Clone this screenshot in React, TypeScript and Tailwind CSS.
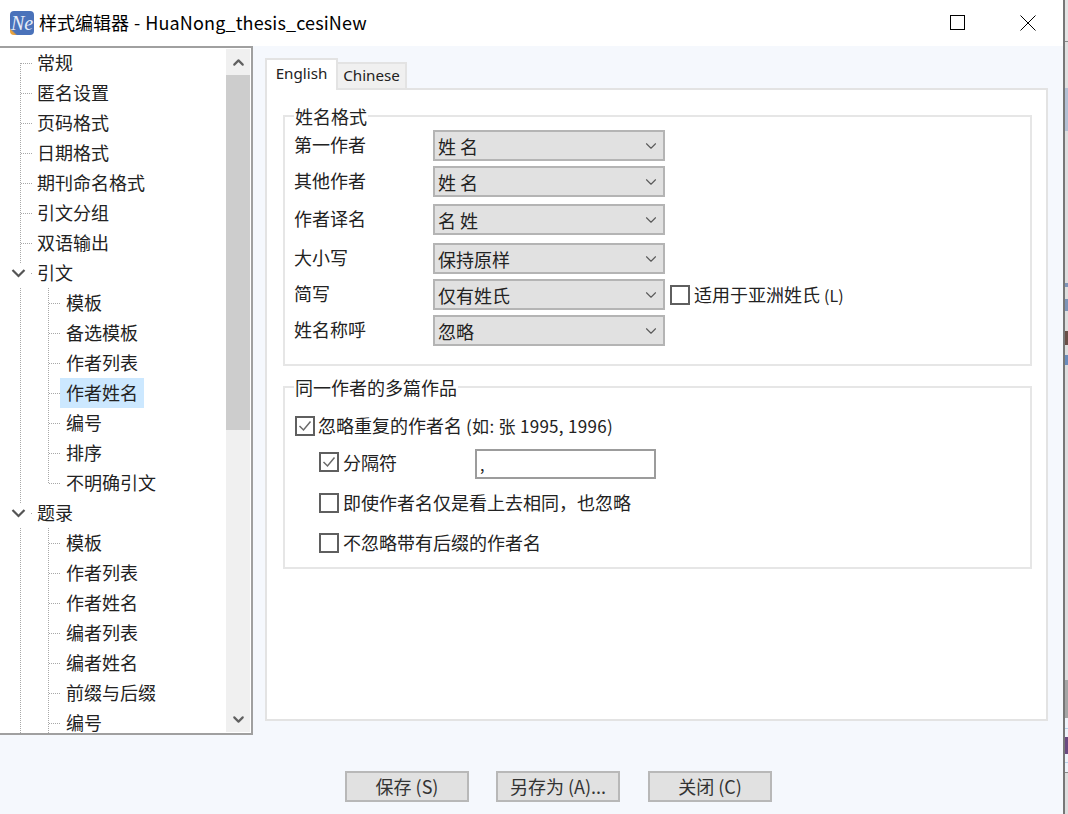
import React from 'react';
import { ChevronDown, ChevronUp } from 'lucide-react';

const cjk = "font-['Noto_Sans_CJK_SC','Noto_Sans',sans-serif]";

type TreeRow = { label: string; level: 0 | 1; open?: boolean; selected?: boolean; last?: boolean };

const treeRows: TreeRow[] = [
  { label: '常规', level: 0 },
  { label: '匿名设置', level: 0 },
  { label: '页码格式', level: 0 },
  { label: '日期格式', level: 0 },
  { label: '期刊命名格式', level: 0 },
  { label: '引文分组', level: 0 },
  { label: '双语输出', level: 0 },
  { label: '引文', level: 0, open: true },
  { label: '模板', level: 1 },
  { label: '备选模板', level: 1 },
  { label: '作者列表', level: 1 },
  { label: '作者姓名', level: 1, selected: true },
  { label: '编号', level: 1 },
  { label: '排序', level: 1 },
  { label: '不明确引文', level: 1, last: true },
  { label: '题录', level: 0, open: true },
  { label: '模板', level: 1 },
  { label: '作者列表', level: 1 },
  { label: '作者姓名', level: 1 },
  { label: '编者列表', level: 1 },
  { label: '编者姓名', level: 1 },
  { label: '前缀与后缀', level: 1 },
  { label: '编号', level: 1 },
];

// dotted connector lines of one tree row
const TreeGuides: React.FC<{ row: TreeRow; index: number; height: number }> = ({ row, index, height }) => {
  const dots = { stroke: '#a8a8a8', strokeWidth: 1, strokeDasharray: '1 1' };
  const afterCiting = index > 7 && index < 15;
  const afterBiblio = index > 15;
  return (
    <svg width="64" height={height} className="shrink-0">
      {row.level === 0 && !row.open && <line x1="20.5" y1={index === 0 ? 15 : 0} x2="20.5" y2="30" {...dots} />}
      {row.level === 0 && !row.open && <line x1="21" y1="15.5" x2="33" y2="15.5" {...dots} />}
      {row.open && <line x1="20.5" y1="0" x2="20.5" y2="6" {...dots} />}
      {row.open && <line x1="31" y1="15.5" x2="33" y2="15.5" {...dots} />}
      {row.open && <path d="M12.5 12 L18.5 18 L24.5 12" fill="none" stroke="#555" strokeWidth="2.2" />}
      {(afterCiting || afterBiblio) && <line x1="20.5" y1="0" x2="20.5" y2="30" {...dots} />}
      {row.level === 1 && <line x1="48.5" y1="0" x2="48.5" y2={row.last ? 15 : 30} {...dots} />}
      {row.level === 1 && <line x1="49" y1="15.5" x2="61" y2="15.5" {...dots} />}
    </svg>
  );
};

const Tree: React.FC = () => (
  <div className="flex h-[689px] w-[253px] shrink-0 border-t-2 border-r-2 border-b-2 border-[#a0a0a0] bg-white">
    <div className="flex min-w-0 flex-1 flex-col">
      {treeRows.map((row, i) => {
        // the list is scrolled so its bottom row only just fits
        const clipped = i === treeRows.length - 1;
        return (
          <div key={i} className={`flex shrink-0 ${clipped ? 'h-[25px] items-start' : 'h-[30px] items-center'}`}>
            <TreeGuides row={row} index={i} height={clipped ? 25 : 30} />
            <span
              className={`flex items-center pb-[2px] text-[18px] leading-none text-[#222] ${
                row.level === 0 ? '-ml-[27px]' : '-ml-[4px] px-[6px]'
              } ${row.selected ? 'h-[30px] bg-[#cce8ff]' : ''} ${clipped ? 'mt-[5px]' : ''}`}
            >
              {row.label}
            </span>
          </div>
        );
      })}
    </div>
    <div className="my-[1px] flex w-[24px] shrink-0 flex-col bg-[#f0f0f0]">
      <div className="flex h-[26px] items-center justify-center">
        <ChevronUp size={17} strokeWidth={3} className="text-[#606060]" />
      </div>
      <div className="h-[355px] bg-[#cdcdcd]" />
      <div className="mt-auto flex h-[26px] items-center justify-center">
        <ChevronDown size={17} strokeWidth={3} className="text-[#606060]" />
      </div>
    </div>
    <div className="w-[1px] shrink-0 bg-white" />
  </div>
);

const Select: React.FC<{ value: string }> = ({ value }) => (
  <div className="flex h-[31px] w-[232px] shrink-0 items-center justify-between border-2 border-[#b4b4b4] bg-[#e1e1e1] pr-[3px] pl-[3px] text-[18px] leading-none text-[#222]">
    <span>{value}</span>
    <ChevronDown size={18} strokeWidth={1.5} className="text-[#5a5a5a]" />
  </div>
);

const NameRow: React.FC<{ label: string; value: string; className: string; children?: React.ReactNode }> = ({
  label,
  value,
  className,
  children,
}) => (
  <div className={`flex items-center ${className}`}>
    <span className="w-[138px] shrink-0 -translate-x-[1px] -translate-y-[2px] text-[18px] leading-none text-[#222]">
      {label}
    </span>
    <Select value={value} />
    {children}
  </div>
);

const Check: React.FC<{ checked?: boolean }> = ({ checked }) => (
  <span className="flex h-[20px] w-[20px] shrink-0 items-center justify-center border-2 border-[#5f5f5f] bg-white">
    {checked && (
      <svg width="16" height="16" viewBox="0 0 16 16">
        <path d="M2.5 8 L6.5 12 L13.5 3.5" fill="none" stroke="#6a6a6a" strokeWidth="1.5" />
      </svg>
    )}
  </span>
);

const GroupBox: React.FC<{ title: string; className: string; children: React.ReactNode }> = ({
  title,
  className,
  children,
}) => (
  <div className={`relative border-2 border-[#e6e6e6] ${className}`}>
    <span className="absolute -top-[11px] left-[9px] bg-white px-[1px] text-[18px] leading-[20px] text-[#222]">
      {title}
    </span>
    {children}
  </div>
);

const Footer: React.FC<{ label: string; className?: string }> = ({ label, className = '' }) => (
  <button
    className={`flex h-[31px] w-[124px] items-center justify-center border-2 border-[#b8b8b8] bg-[#e1e1e1] pb-[1px] text-[18px] leading-none text-[#333] ${className}`}
  >
    {label}
  </button>
);

// sliver of whatever window lies behind the dialog
const OuterStrip: React.FC = () => (
  <div className="flex w-[5px] shrink-0 flex-col border-l-2 border-[#777] bg-[#dcdcdc]">
    <div className="h-[41px] bg-[#e4e4e4]" />
    <div className="h-[1px] bg-[#8a8a8a]" />
    <div className="h-[46px] bg-[#e0e0e0]" />
    <div className="h-[43px] bg-[#b4c0d4]" />
    <div className="h-[152px] bg-[#dedede]" />
    <div className="h-[4px] bg-[#7f95b8]" />
    <div className="h-[12px] bg-[#dedede]" />
    <div className="h-[12px] bg-[#7f95b8]" />
    <div className="h-[20px] bg-[#dedede]" />
    <div className="h-[14px] bg-[#6a5048]" />
    <div className="h-[10px] bg-[#dedede]" />
    <div className="h-[10px] bg-[#6a8cbc]" />
    <div className="h-[315px] bg-[#dedede]" />
    <div className="h-[38px] bg-[#a6a6a6]" />
    <div className="h-[10px] bg-[#eef3fa]" />
    <div className="h-[1px] bg-[#b8d0ea]" />
    <div className="h-[8px] bg-[#eef3fa]" />
    <div className="h-[17px] bg-[#6a4a80]" />
    <div className="h-[8px] bg-[#eef3fa]" />
    <div className="h-[1px] bg-[#b8d0ea]" />
    <div className="h-[9px] bg-[#eef3fa]" />
    <div className="h-[1px] bg-[#8a8a8a]" />
    <div className="flex-1 bg-[#dedede]" />
  </div>
);

export default function App() {
  return (
    <div className={`flex h-[814px] w-[1068px] overflow-hidden bg-[#f5f8fd] ${cjk}`}>
      <div className="flex w-[1063px] flex-col">
        {/* Title bar */}
        <div className="flex h-[46px] shrink-0 items-center bg-white pl-[10px]">
          <div className="flex h-[24px] w-[24px] items-center justify-center overflow-hidden rounded-[4px] bg-[linear-gradient(45deg,#e9a23b_11%,#4a72ba_16%)]">
            <span className="font-['Liberation_Serif',serif] text-[20px] leading-none text-[#e6edf8] italic">Ne</span>
          </div>
          <span className="ml-[5px] pb-[2px] text-[18px] leading-none text-black">
            样式编辑器<span className="mx-[5px]">-</span>
            <span className="tracking-[0.14px]">HuaNong_thesis_cesiNew</span>
          </span>
          <svg width="16" height="16" viewBox="0 0 16 16" className="ml-auto">
            <rect x="0.5" y="0.5" width="14" height="14" fill="none" stroke="#000" />
          </svg>
          <svg width="16" height="16" viewBox="0 0 16 16" className="mr-[27px] ml-[54px]">
            <path d="M0.5 0.5 L15.5 15.5 M15.5 0.5 L0.5 15.5" fill="none" stroke="#000" />
          </svg>
        </div>

        <div className="flex">
          <Tree />

          {/* Right side */}
          <div className="flex min-w-0 flex-1 flex-col pt-[12px] pr-[15px] pl-[12px]">
            <div className="flex h-[30px] items-end">
              <div className="z-10 -mb-[2px] flex h-[32px] w-[73px] items-start justify-center border-2 border-b-0 border-[#e3e3e3] bg-white pt-[2px] font-['Noto_Sans',sans-serif] text-[15.2px] leading-[22px] text-[#222]">
                English
              </div>
              <div className="flex h-[26px] w-[69px] items-center justify-center border-2 border-b-0 border-l-0 border-[#e3e3e3] bg-[#f0f0f0] font-['Noto_Sans',sans-serif] text-[15.2px] leading-none text-[#222]">
                Chinese
              </div>
            </div>
            <div className="flex h-[633px] flex-col border-2 border-[#e3e3e3] bg-white pt-[25px] pr-[14px] pl-[16px]">
              <GroupBox title="姓名格式" className="h-[251px] pt-[13px] pl-[10px]">
                <NameRow label="第一作者" value="姓 名" className="" />
                <NameRow label="其他作者" value="姓 名" className="mt-[5px]" />
                <NameRow label="作者译名" value="名 姓" className="mt-[7px]" />
                <NameRow label="大小写" value="保持原样" className="mt-[8px]" />
                <NameRow label="简写" value="仅有姓氏" className="mt-[5px]">
                  <span className="ml-[5px]">
                    <Check />
                  </span>
                  <span className="ml-[4px] -translate-y-[1px] text-[18px] leading-none text-[#222]">
                    适用于亚洲姓氏 <span className="text-[16px]">(L)</span>
                  </span>
                </NameRow>
                <NameRow label="姓名称呼" value="忽略" className="mt-[5px]" />
              </GroupBox>

              <GroupBox title="同一作者的多篇作品" className="mt-[20px] h-[183px] pt-[28px] pl-[10px]">
                <div className="flex h-[20px] items-center">
                  <Check checked />
                  <span className="ml-[3px] -translate-y-[1px] text-[18px] leading-none text-[#222]">
                    忽略重复的作者名 <span className="text-[17px] tracking-[0.3px]">(如: 张 1995, 1996)</span>
                  </span>
                </div>
                <div className="mt-[13px] flex h-[30px] items-start pl-[24px]">
                  <span className="mt-[3px]">
                    <Check checked />
                  </span>
                  <span className="mt-[4px] ml-[4px] w-[132px] text-[18px] leading-none text-[#222]">分隔符</span>
                  <div className="flex h-[30px] w-[181px] items-center border-2 border-[#9c9c9c] bg-white pl-[3px] text-[16px] leading-none text-[#222]">
                    ,
                  </div>
                </div>
                <div className="mt-[14px] flex h-[20px] items-center pl-[24px]">
                  <Check />
                  <span className="ml-[4px] -translate-y-[1px] text-[18px] leading-none text-[#222]">
                    即使作者名仅是看上去相同，也忽略
                  </span>
                </div>
                <div className="mt-[20px] flex h-[20px] items-center pl-[24px]">
                  <Check />
                  <span className="ml-[4px] -translate-y-[1px] text-[18px] leading-none text-[#222]">
                    不忽略带有后缀的作者名
                  </span>
                </div>
              </GroupBox>
            </div>
          </div>
        </div>

        {/* Footer buttons */}
        <div className="flex gap-[27px] pt-[36px] pl-[345px]">
          <Footer label="保存 (S)" />
          <Footer label="另存为 (A)..." />
          <Footer label="关闭 (C)" className="ml-[1px]" />
        </div>
      </div>
      <OuterStrip />
    </div>
  );
}
